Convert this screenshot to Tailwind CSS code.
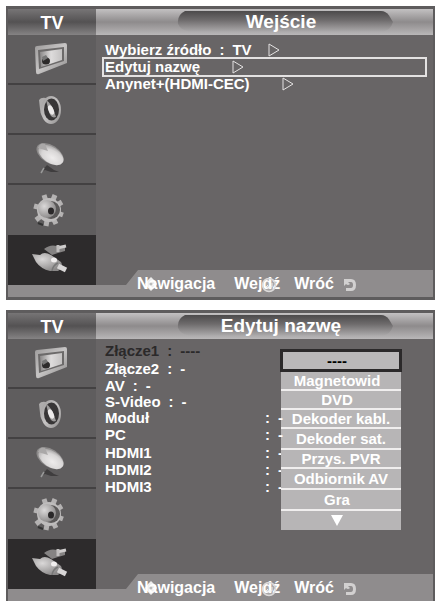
<!DOCTYPE html>
<html lang="pl">
<head>
    <meta charset="UTF-8">
    <meta name="viewport" content="width=device-width, initial-scale=1.0">
    <title>Menu TV - Wejście</title>
    <script src="https://cdn.jsdelivr.net/npm/@tailwindcss/browser@4"></script>
</head>
<body class="h-screen overflow-hidden bg-white pl-[6px] pt-[6px] flex flex-col gap-[10px] font-['Liberation_Sans',Arial,sans-serif] font-bold text-white">

    <!-- shared gradients and sidebar icons -->
    <svg class="absolute size-0" aria-hidden="true">
        <defs>
            <linearGradient id="metal" x1="0" y1="0" x2="1" y2="1">
                <stop offset="0" stop-color="#9c9a9a"/>
                <stop offset=".5" stop-color="#c6c4c4"/>
                <stop offset="1" stop-color="#8e8c8c"/>
            </linearGradient>
            <linearGradient id="screen" x1="0" y1="0" x2="1" y2="0">
                <stop offset="0" stop-color="#8a8888"/>
                <stop offset=".5" stop-color="#dedcdc"/>
                <stop offset="1" stop-color="#c4c2c2"/>
            </linearGradient>
            <radialGradient id="dish" cx=".6" cy=".6" r=".7">
                <stop offset="0" stop-color="#eeecec"/>
                <stop offset=".6" stop-color="#d8d6d6"/>
                <stop offset="1" stop-color="#9a9898"/>
            </radialGradient>
            <radialGradient id="hub" cx=".35" cy=".35" r=".7">
                <stop offset="0" stop-color="#dad8d8"/>
                <stop offset="1" stop-color="#8a8888"/>
            </radialGradient>
            <linearGradient id="pill" x1="0" y1="0" x2="0" y2="1">
                <stop offset="0" stop-color="#4c4a4b"/>
                <stop offset=".45" stop-color="#6e6b6c"/>
                <stop offset="1" stop-color="#a9a7a8"/>
            </linearGradient>
        </defs>
        <symbol id="icon-picture" viewBox="0 0 88 50">
            <path d="M27 13 Q27 11 29 11 L57 8 Q59 8 59 10 V28 L31 39 Q28 40 28 37 Z" fill="url(#metal)"/>
            <path d="M30 15 L56 12 V26 L31 34 Z" fill="#6c6a6a"/>
            <path d="M32 17 L54 14 V25 L33 32 Z" fill="url(#screen)"/>
            <ellipse cx="38" cy="26" rx="4" ry="3.500" fill="#2c2a2a"/>
            <path d="M34 22 l4 -2 2 3 -5 3z" fill="#777"/>
        </symbol>
        <symbol id="icon-sound" viewBox="0 0 88 50">
            <path d="M31 15 Q33 12 38 13 L40 36 Q32 32 32 24 Z" fill="#aeacac"/>
            <ellipse cx="43" cy="25" rx="10" ry="14" fill="url(#metal)"/>
            <ellipse cx="43.500" cy="24.500" rx="7.500" ry="11" fill="#383637"/>
            <path d="M38 15 Q44 18 48 32 Q43 34 41 27 Z" fill="#9e9c9c"/>
            <ellipse cx="43" cy="25" rx="2.500" ry="5" transform="rotate(-24 43 25)" fill="#eceaea"/>
        </symbol>
        <symbol id="icon-channel" viewBox="0 0 88 50">
            <path d="M39 30 L33 37 37 35 43 37 51 37 46 35 Z" fill="#3f3d3e"/>
            <path d="M36 33 l-3 5" stroke="#999" stroke-width="1.500"/>
            <ellipse cx="42" cy="19" rx="15" ry="9" transform="rotate(33 42 19)" fill="#8c8a8a"/>
            <ellipse cx="43" cy="20" rx="14" ry="8" transform="rotate(33 43 20)" fill="url(#dish)"/>
            <path d="M30 13 Q32 7 37 9 L40 16 Z" fill="#aaa8a8"/>
        </symbol>
        <symbol id="icon-setup" viewBox="0 0 88 50">
            <g stroke="#b4b2b2" stroke-width="5">
                <path d="M41 25 L36 10M41 25 L47 10M41 25 L54 17M41 25 L55 30M41 25 L48 39M41 25 L38 41M41 25 L28 35M41 25 L26 21"/>
            </g>
            <circle cx="41" cy="25" r="12" fill="#bebcbc"/>
            <circle cx="43" cy="25" r="9" fill="#5a5858"/>
            <circle cx="39" cy="24" r="9" fill="url(#hub)"/>
            <ellipse cx="43" cy="26" rx="3" ry="3.500" fill="#2a2829"/>
            <path d="M30 38 l5 2" stroke="#333" stroke-width="2"/>
        </symbol>
        <symbol id="icon-input" viewBox="0 0 88 50">
            <path d="M36 14 Q42 9 49 11 L57 12 V16 L50 18 44 20 Z" fill="#858383"/>
            <path d="M49 13 L58 11" stroke="#cfcdcd" stroke-width="3"/>
            <path d="M50 10 v7" stroke="#c0bebe" stroke-width="3"/>
            <path d="M24 19 L32 20 Q36 16 43 20 L53 27 Q56 32 50 36 L42 36 Q33 34 28 27 Z" fill="url(#hub)"/>
            <path d="M50 31 L58 35" stroke="#d8d6d6" stroke-width="5"/>
            <ellipse cx="46" cy="25" rx="3" ry="2.500" fill="#f0eeee"/>
            <path d="M44 36 Q45 30 50 28" stroke="#777" stroke-width="1.500" fill="none"/>
        </symbol>
        <symbol id="icon-more" viewBox="0 0 12 14">
            <path d="M1 1 L11 7 L1 13 Z" fill="none" stroke="#e4e2e2"/>
        </symbol>
        <symbol id="icon-move" viewBox="0 0 12 14">
            <path d="M6 0 L9 3 12 7 9 11 6 14 3 11 0 7 3 3Z" fill="#fff" fill-opacity=".85"/>
            <circle cx="6" cy="7" r="1.500" fill="#bbb"/>
        </symbol>
        <symbol id="icon-enter" viewBox="0 0 16 16">
            <circle cx="8" cy="8" r="6.500" fill="#fff" fill-opacity=".25" stroke="#dcdada" stroke-width="1.500"/>
            <path d="M5 10 H11 V6 M7 8 L5 10 7 12" fill="none" stroke="#eee"/>
        </symbol>
        <symbol id="icon-return" viewBox="0 0 14 14">
            <path d="M1 1 V8 L3 6 Q5 8 7 6 L5 4 H8 Q10 4 10 7 Q10 10 8 10 H3 V13 H8 Q13 13 13 7 Q13 1 8 1 Z" fill="#d2d0d0"/>
        </symbol>
        <symbol id="title-pill" viewBox="0 0 216 24" preserveAspectRatio="none">
            <path d="M8 0 H204 Q209 0 212 5 L216 12 Q213 22 206 22 H12 Q4 22 1 14 Q0 4 8 0 Z" fill="url(#pill)"/>
        </symbol>
    </svg>

    <section class="shrink-0 border-t-[3px] border-b-[3px] border-x-2 border-[#5e5c5d]">
        <header class="flex h-[26px]">
            <h2 class="w-[88px] shrink-0 text-center text-lg leading-[28px] bg-linear-to-b from-[#777576] via-[#545253] to-[#858384]">TV</h2>
            <div class="flex-1 grid grid-cols-[81fr_216fr_40fr] bg-linear-to-b from-[#c3c1c2] via-[#8e8b8c] to-[#b9b7b8]">
                <div class="relative col-start-2">
                    <svg class="absolute inset-x-0 top-[2px] w-full h-[22px]"><use href="#title-pill"/></svg>
                    <h1 class="relative pr-2 text-center text-[19px] leading-[26px]">Wejście</h1>
                </div>
            </div>
        </header>
        <div class="flex">
            <nav class="w-[88px] shrink-0 bg-[#5f5d5e]">
                <button aria-label="Obraz" class="block w-full h-[50px] border-b-2 border-[#434142]"><svg class="w-full h-[50px]"><use href="#icon-picture"/></svg></button>
                <button aria-label="Dźwięk" class="block w-full h-[50px] border-b-2 border-[#434142]"><svg class="w-full h-[50px]"><use href="#icon-sound"/></svg></button>
                <button aria-label="Kanał" class="block w-full h-[50px] border-b-2 border-[#434142]"><svg class="w-full h-[50px]"><use href="#icon-channel"/></svg></button>
                <button aria-label="Ustawienia" class="block w-full h-[50px]"><svg class="w-full h-[50px]"><use href="#icon-setup"/></svg></button>
                <button aria-label="Wejście" class="block w-full h-[50px] bg-[#2d2b2c]"><svg class="w-full h-[50px]"><use href="#icon-input"/></svg></button>
            </nav>
            <main class="flex-1 bg-[#686566] pl-[6px] pr-[6px] pt-2 text-[15px]">
                <button class="flex items-center w-full h-[14px] pl-[3px] leading-[16px]">
                    <span>Wybierz źródło</span><span class="ml-2">:</span><span class="ml-2">TV</span>
                    <svg class="ml-4 w-3 h-[14px]"><use href="#icon-more"/></svg>
                </button>
                <button class="flex items-center w-full h-[20px] pl-[1px] border-2 border-[#e4e2e2] leading-[16px]">
                    <span>Edytuj nazwę</span>
                    <svg class="ml-8 w-3 h-[14px]"><use href="#icon-more"/></svg>
                </button>
                <button class="flex items-center w-full h-[14px] pl-[3px] leading-[16px]">
                    <span>Anynet+(HDMI-CEC)</span>
                    <svg class="ml-8 w-3 h-[14px]"><use href="#icon-more"/></svg>
                </button>
            </main>
        </div>
        <footer class="relative -mt-[15px] h-[27px] flex items-center pl-[129px] bg-[#8f8c8d] text-base [clip-path:polygon(0_15px,118px_15px,130px_0,100%_0,100%_100%,0_100%)]">
            <span class="relative">Nawigacja<svg class="absolute left-2 top-[5px] w-3 h-[14px]"><use href="#icon-move"/></svg></span>
            <span class="relative ml-[19px]">Wejdź<svg class="absolute right-[3px] top-[5px] size-4"><use href="#icon-enter"/></svg></span>
            <span class="ml-[14px]">Wróć</span>
            <svg class="ml-[9px] mt-[2px] size-[14px]"><use href="#icon-return"/></svg>
        </footer>
    </section>

    <section class="shrink-0 border-t-[3px] border-b-[3px] border-x-2 border-[#5e5c5d]">
        <header class="flex h-[26px]">
            <h2 class="w-[88px] shrink-0 text-center text-lg leading-[28px] bg-linear-to-b from-[#777576] via-[#545253] to-[#858384]">TV</h2>
            <div class="flex-1 grid grid-cols-[81fr_216fr_40fr] bg-linear-to-b from-[#c3c1c2] via-[#8e8b8c] to-[#b9b7b8]">
                <div class="relative col-start-2">
                    <svg class="absolute inset-x-0 top-[2px] w-full h-[22px]"><use href="#title-pill"/></svg>
                    <h1 class="relative pr-2 text-center text-[19px] leading-[26px]">Edytuj nazwę</h1>
                </div>
            </div>
        </header>
        <div class="flex">
            <nav class="w-[88px] shrink-0 bg-[#5f5d5e]">
                <button aria-label="Obraz" class="block w-full h-[50px] border-b-2 border-[#434142]"><svg class="w-full h-[50px]"><use href="#icon-picture"/></svg></button>
                <button aria-label="Dźwięk" class="block w-full h-[50px] border-b-2 border-[#434142]"><svg class="w-full h-[50px]"><use href="#icon-sound"/></svg></button>
                <button aria-label="Kanał" class="block w-full h-[50px] border-b-2 border-[#434142]"><svg class="w-full h-[50px]"><use href="#icon-channel"/></svg></button>
                <button aria-label="Ustawienia" class="block w-full h-[50px]"><svg class="w-full h-[50px]"><use href="#icon-setup"/></svg></button>
                <button aria-label="Wejście" class="block w-full h-[50px] bg-[#2d2b2c]"><svg class="w-full h-[50px]"><use href="#icon-input"/></svg></button>
            </nav>
            <main class="relative flex-1 bg-[#686566] pl-[9px] pt-[2px] text-[15px] leading-[18px]">
                <dl class="grid grid-cols-[160px_auto] grid-rows-[18px_18px_16px_16px_16px_18px_18px_16px_18px] items-center leading-[15px]">
                    <dt class="text-[#2b292a]">Złącze1<span class="ml-2">:</span><span class="ml-2">----</span></dt><dd></dd>
                    <dt>Złącze2<span class="ml-2">:</span><span class="ml-2">-</span></dt><dd></dd>
                    <dt>AV<span class="ml-2">:</span><span class="ml-2">-</span></dt><dd></dd>
                    <dt>S-Video<span class="ml-2">:</span><span class="ml-2">-</span></dt><dd></dd>
                    <dt>Moduł</dt><dd class="relative z-10">:<span class="ml-2">-</span></dd>
                    <dt>PC</dt><dd class="relative z-10">:<span class="ml-2">-</span></dd>
                    <dt>HDMI1</dt><dd>:<span class="ml-2">-</span></dd>
                    <dt>HDMI2</dt><dd>:<span class="ml-2">-</span></dd>
                    <dt>HDMI3</dt><dd>:<span class="ml-2">-</span></dd>
                </dl>
                <!-- list of names, opened over the rows -->
                <div role="listbox" aria-label="Nazwa" class="absolute top-[10px] right-[31px] w-[122px] flex flex-col">
                    <button role="option" aria-selected="true" class="h-[23px] pr-2 border-[3px] border-[#2b292a] bg-[#bab8b9] text-black leading-[17px]">----</button>
                    <div class="mx-px flex flex-col bg-[#b7b5b6] divide-y-2 divide-[#f0eeee]">
                        <button role="option" class="h-[19px] pr-2">Magnetowid</button>
                        <button role="option" class="h-[19px] pr-2">DVD</button>
                        <button role="option" class="h-[19px]">Dekoder kabl.</button>
                        <button role="option" class="h-[21px]">Dekoder sat.</button>
                        <button role="option" class="h-[19px]">Przys. PVR</button>
                        <button role="option" class="h-[21px]">Odbiornik AV</button>
                        <button role="option" class="h-[21px] pr-2">Gra</button>
                        <button aria-label="Dalej" class="h-[19px] pr-2"><svg class="mx-auto w-3 h-[11px]" viewBox="0 0 12 11"><path d="M0 0H12L6 11Z" fill="#fff"/></svg></button>
                    </div>
                </div>
            </main>
        </div>
        <footer class="relative -mt-[15px] h-[27px] flex items-center pl-[129px] bg-[#8f8c8d] text-base [clip-path:polygon(0_15px,118px_15px,130px_0,100%_0,100%_100%,0_100%)]">
            <span class="relative">Nawigacja<svg class="absolute left-2 top-[5px] w-3 h-[14px]"><use href="#icon-move"/></svg></span>
            <span class="relative ml-[19px]">Wejdź<svg class="absolute right-[3px] top-[5px] size-4"><use href="#icon-enter"/></svg></span>
            <span class="ml-[14px]">Wróć</span>
            <svg class="ml-[9px] mt-[2px] size-[14px]"><use href="#icon-return"/></svg>
        </footer>
    </section>
</body>
</html>
